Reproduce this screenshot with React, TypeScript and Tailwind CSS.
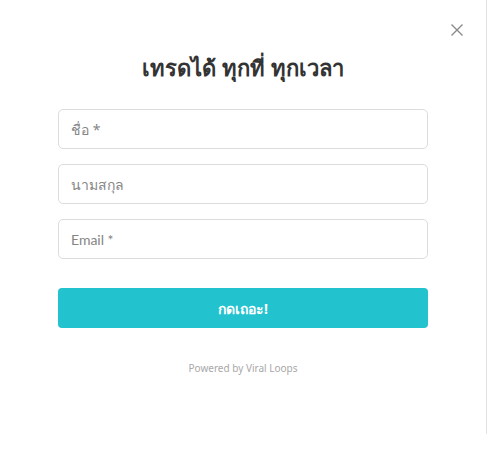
import React from "react";

export default function App() {
  const inputCls =
    "w-full h-[40px] rounded-[5px] border border-[#dcdcdc] bg-white px-[12px] text-[14px] text-[#555] placeholder:text-[#858585] outline-none";
  return (
    <div className="w-[488px] h-[460px] bg-white" style={{ fontFamily: '"Noto Sans", "Open Sans", sans-serif' }}>
      <div className="relative w-[487px] h-[434px] border-r border-[#e3e3e3] px-[58px] pt-[47px]">
        <button className="absolute right-[22px] top-[23px] text-[#8a8a8a]" aria-label="close">
          <svg width="14" height="14" viewBox="0 0 14 14" fill="none" stroke="currentColor" strokeWidth="1.4">
            <path d="M1.5 1.5 L12.5 12.5 M12.5 1.5 L1.5 12.5" />
          </svg>
        </button>
        <h1 className="text-center text-[22px] font-bold text-[#333] leading-[40px]">เทรดได้ ทุกที่ ทุกเวลา</h1>
        <div className="mt-[22px] flex flex-col gap-[15px]">
          <input className={inputCls} placeholder="ชื่อ *" />
          <input className={inputCls} placeholder="นามสกุล" />
          <input className={inputCls} placeholder="Email *" style={{ fontFamily: '"Lato", "Noto Sans", sans-serif' }} />
        </div>
        <button className="mt-[29px] w-full h-[40px] rounded-[4px] bg-[#22c3cf] text-white text-[14px] font-bold">
          กดเถอะ!
        </button>
        <div className="mt-[33px] text-center text-[10px] text-[#a8a8a8]">Powered by Viral Loops</div>
      </div>
    </div>
  );
}
